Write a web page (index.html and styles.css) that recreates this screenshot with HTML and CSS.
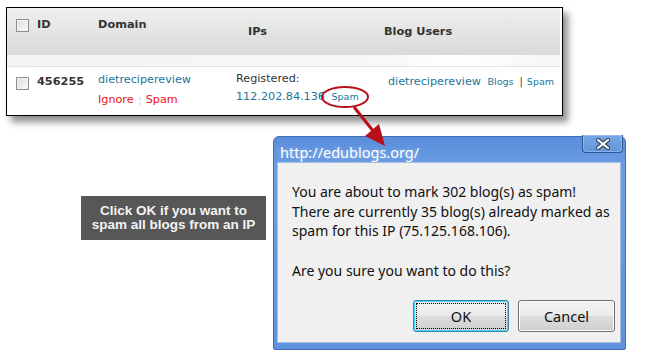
FILE: index.html
```html
<!DOCTYPE html>
<html lang="en">
<head>
    <meta charset="UTF-8">
    <title>Spam IP confirmation</title>
    <link rel="stylesheet" href="styles.css">
</head>
<body>
    <div class="panel">
        <div class="grid head">
            <span class="check"></span>
            <span>ID</span>
            <span>Domain</span>
            <span class="low ips">IPs</span>
            <span class="low users">Blog Users</span>
        </div>
        <div class="strip"></div>
        <div class="grid row">
            <span class="check row-check"></span>
            <span class="id">456255</span>
            <div class="domain">
                <a href="#">dietrecipereview</a><br>
                <a href="#" class="red">Ignore</a> <span class="bar">&brvbar;</span> <a href="#" class="red">Spam</a>
            </div>
            <div class="ip">
                Registered:<br>
                <a href="#">112.202.84.136</a> <a href="#" class="small">Spam</a>
            </div>
            <div class="users">
                <a href="#">dietrecipereview</a> <a href="#" class="small">Blogs</a><span class="pipe">|</span><a href="#" class="small">Spam</a>
            </div>
        </div>
    </div>

    <div class="lower">
        <div class="note">Click OK if you want to<br>spam all blogs from an IP</div>
        <div class="dialog">
            <div class="titlebar">
                <span class="title">http://edublogs.org/</span>
                <span class="close">
                    <svg width="16" height="12" viewBox="0 0 16 12">
                        <path d="M3 2 L13 10 M13 2 L3 10" stroke="#33415a" stroke-width="4.2" stroke-linecap="round"/>
                        <path d="M3 2 L13 10 M13 2 L3 10" stroke="#fff" stroke-width="2.2" stroke-linecap="round"/>
                    </svg>
                </span>
            </div>
            <div class="content">
                <p class="msg">You are about to mark 302 blog(s) as spam!<br>There are currently 35 blog(s) already marked as<br>spam for this IP (75.125.168.106).</p>
                <p class="msg">Are you sure you want to do this?</p>
                <div class="buttons">
                    <button class="btn ok"><span>OK</span></button>
                    <button class="btn">Cancel</button>
                </div>
            </div>
        </div>
    </div>

    <svg class="callout" width="650" height="354" viewBox="0 0 650 354">
        <ellipse cx="345" cy="97" rx="23" ry="10" fill="none" stroke="#b80f18" stroke-width="2"/>
        <line x1="354" y1="107" x2="374" y2="132" stroke="#b80f18" stroke-width="3"/>
        <polygon points="385,146 365,136 379,124" fill="#b80f18"/>
    </svg>
</body>
</html>
```

FILE: styles.css
```css
body {
    margin: 0;
    width: 650px;
    height: 354px;
    overflow: hidden;
    position: relative;
    background: #fff;
    font-family: 'DejaVu Sans', Verdana, sans-serif;
    font-size: 11.2px;
    color: #333;
}
a {
    color: #21759b;
    text-decoration: none;
}
.panel {
    box-sizing: border-box;
    width: 557px;
    height: 109px;
    margin: 7px 0 0 6px;
    border: 1px solid #000;
    background: #fff;
    box-shadow: 5px 6px 7px rgba(0, 0, 0, 0.45);
}
.grid {
    display: grid;
    grid-template-columns: 21px 61px 138px 152px 1fr;
    padding-left: 9px;
    margin-right: 2px;
}
.head {
    height: 47px;
    box-sizing: border-box;
    padding-top: 10px;
    background: linear-gradient(#efefef, #d9d9d9);
    font-weight: bold;
    font-size: 11.3px;
    line-height: 14px;
    align-items: start;
}
.head .check {
    margin-top: 1px;
}
.low {
    margin-top: 7px;
}
.ips {
    padding-left: 12px;
}
.users {
    margin-left: -4px;
}
.row .users {
    margin-left: 0;
    padding-top: 2px;
}
.strip {
    height: 11px;
    margin-right: 2px;
    background: linear-gradient(90deg, #f3f3f3, #f8f8f8 70%, #fff 80%, #f6f6f6);
    border-bottom: 1px solid #e2e2e2;
}
.check {
    display: block;
    width: 13px;
    height: 13px;
    box-sizing: border-box;
    border: 1px solid #8e8f8f;
    background: linear-gradient(135deg, #dcdcdc, #fbfbfb);
    box-shadow: inset 0 0 0 1px #f4f4f4;
}
.row {
    padding-top: 3px;
    line-height: 20px;
    align-items: start;
}
.row-check {
    margin-top: 7px;
}
.id {
    font-weight: bold;
    font-size: 11.3px;
    margin-top: 2px;
}
.red {
    color: #ee1111;
}
.bar {
    color: #c8c8c8;
    font-size: 9px;
    margin: 0 1px;
}
.ip {
    line-height: 18px;
}
.small {
    font-size: 9.5px;
    margin-left: 3px;
}
.pipe {
    color: #444;
    font-size: 10px;
    margin: 0 1px 0 6px;
}
.lower {
    display: flex;
    align-items: flex-start;
    gap: 7px;
    padding-left: 81px;
    margin-top: 20px;
}
.note {
    width: 185px;
    height: 44px;
    box-sizing: border-box;
    margin-top: 60px;
    padding-top: 8px;
    background: #575757;
    color: #f3f3f3;
    font-family: 'Liberation Sans', Arial, sans-serif;
    font-weight: bold;
    font-size: 13.5px;
    line-height: 14px;
    text-align: center;
}
.dialog {
    width: 353px;
    height: 214px;
    box-sizing: border-box;
    border: 1px solid #3e6db5;
    border-radius: 6px 6px 2px 2px;
    background: linear-gradient(#5a8edb, #6b9ee4 15%, #5f93dd);
    padding: 0 4px 6px 3px;
    display: flex;
    flex-direction: column;
    font-family: 'Noto Sans', 'Open Sans', sans-serif;
}
.titlebar {
    height: 25px;
    display: flex;
    justify-content: space-between;
    align-items: flex-start;
}
.title {
    color: #fff;
    font-size: 14.5px;
    line-height: 20px;
    margin: 5px 0 0 3px;
    text-shadow: 0 0 4px rgba(255, 255, 255, 0.35);
}
.close {
    width: 41px;
    height: 18px;
    box-sizing: border-box;
    margin: -2px -2px 0 0;
    border: 1px solid #2f578f;
    border-top: none;
    border-radius: 0 0 4px 4px;
    background: linear-gradient(#79a6e6, #6395dc);
    box-shadow: inset 0 0 0 1px rgba(255, 255, 255, 0.25);
    display: flex;
    align-items: center;
    justify-content: center;
}
.content {
    flex: 1;
    background: #f0f0f0;
    border: 1px solid #a7bfe2;
    padding: 19px 5px 2px 14px;
    color: #111;
}
.msg {
    margin: 0 0 20px;
    font-size: 14px;
    line-height: 19.5px;
}
.buttons {
    display: flex;
    justify-content: flex-end;
    gap: 9px;
    margin-top: 6px;
}
.btn {
    width: 97px;
    height: 32px;
    box-sizing: border-box;
    border: 1px solid #707070;
    border-radius: 3px;
    background: linear-gradient(#f2f2f2, #ebebeb 50%, #dddddd 51%, #cfcfcf);
    font-family: 'Noto Sans', 'Open Sans', sans-serif;
    font-size: 14.5px;
    color: #111;
    padding: 0;
    box-shadow: inset 0 0 0 1px #fcfcfc;
}
.ok {
    width: 96px;
    border-color: #3c7fb1;
    padding: 2px;
    box-shadow: inset 0 0 0 1px #48dafd;
}
.ok span {
    display: flex;
    align-items: center;
    justify-content: center;
    height: 100%;
    border: 1px dotted #000;
    box-sizing: border-box;
}
.callout {
    position: absolute;
    left: 0;
    top: 0;
    pointer-events: none;
}
```
